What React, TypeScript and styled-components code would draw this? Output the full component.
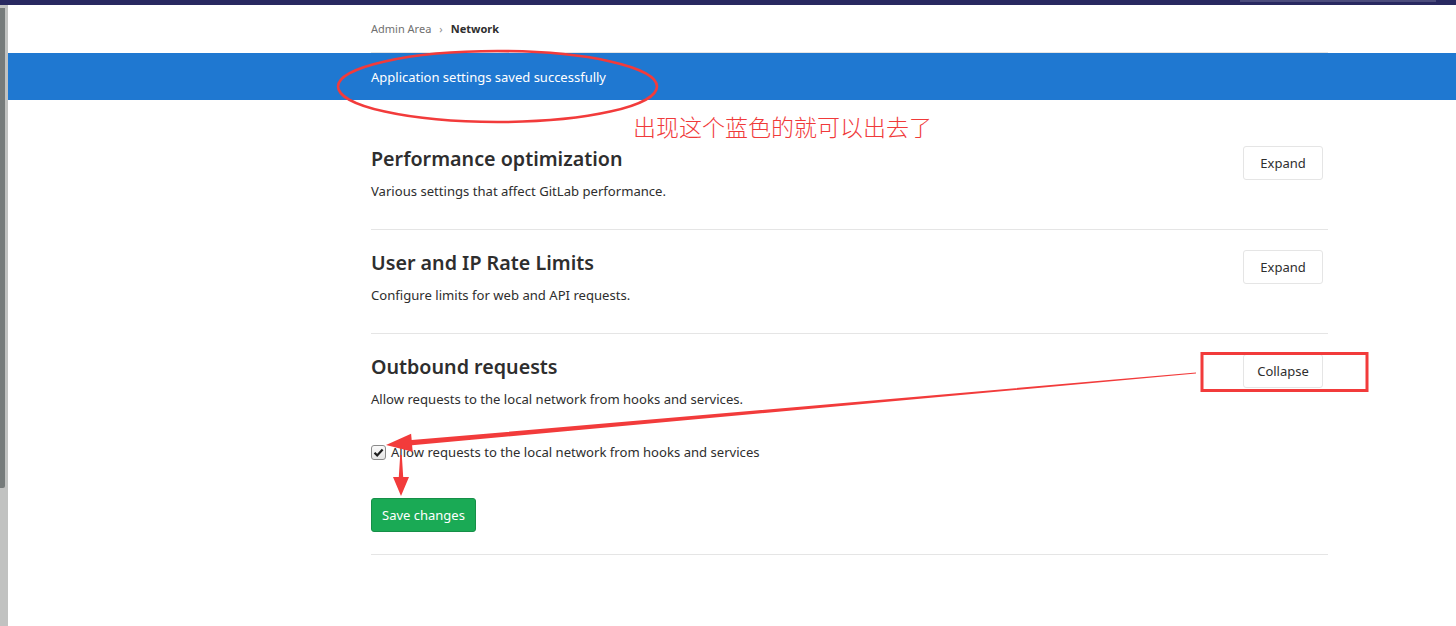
import React from "react";
import styled, { createGlobalStyle } from "styled-components";

const GlobalStyle = createGlobalStyle`
  html, body {
    margin: 0;
    padding: 0;
    background: #ffffff;
    font-family: "Noto Sans", "Open Sans", sans-serif;
    color: #2e2e2e;
    overflow: hidden;
  }
`;

const Page = styled.div`
  position: relative;
  width: 1456px;
  height: 626px;
  display: flex;
  flex-direction: column;
`;

const TopBar = styled.div`
  height: 5px;
  background: #292961;
  display: flex;
  justify-content: flex-end;
  padding-right: 20px;
`;

const SearchEdge = styled.div`
  width: 196px;
  height: 2px;
  background: #4c4c7c;
`;

const Body = styled.div`
  flex: 1;
  display: flex;
`;

const ScrollTrack = styled.div`
  width: 8px;
  background: #c1c2c1;
  padding-top: 3px;
`;

const ScrollThumb = styled.div`
  width: 5px;
  height: 480px;
  background: #767b7b;
  border-radius: 0 0 2px 0;
`;

const Main = styled.main`
  flex: 1;
  display: flex;
  flex-direction: column;
`;

const Container = styled.div`
  width: 957px;
  margin-left: 363px;
`;

const Breadcrumbs = styled.nav`
  height: 47px;
  display: flex;
  align-items: center;
  gap: 8px;
  font-size: 11px;
  border-bottom: 1px solid #e5e5e5;
`;

const Crumb = styled.span<{ $current?: boolean }>`
  color: ${(p) => (p.$current ? "#2e2e2e" : "#707070")};
  font-weight: ${(p) => (p.$current ? 700 : 400)};
`;

const Chevron = styled.span`
  color: #8f8f8f;
  font-size: 11px;
`;

const Flash = styled.div`
  height: 47px;
  background: #1f78d1;
  color: #ffffff;
  font-size: 13px;
  display: flex;
  align-items: center;
`;

const Section = styled.section<{ $top?: number; $bottom?: number }>`
  display: flex;
  flex-direction: column;
  padding: ${(p) => p.$top ?? 19}px 0 ${(p) => p.$bottom ?? 28}px;
  border-bottom: 1px solid #e5e5e5;
`;

const SectionHeader = styled.div`
  display: flex;
  justify-content: space-between;
  align-items: flex-start;
`;

const HeaderText = styled.div`
  display: flex;
  flex-direction: column;
`;

const Title = styled.h4`
  margin: 0;
  font-size: 19.7px;
  line-height: 28px;
  font-weight: 600;
  color: #2e2e2e;
`;

const Desc = styled.p`
  margin: 8px 0 0;
  font-size: 13.1px;
  line-height: 20px;
`;

const Button = styled.button`
  width: 80px;
  height: 34px;
  margin: 1px 5px 0 0;
  background: #ffffff;
  border: 1px solid #e5e5e5;
  border-radius: 3px;
  font-family: inherit;
  font-size: 13px;
  color: #2e2e2e;
`;

const CheckRow = styled.label`
  display: flex;
  align-items: center;
  gap: 5px;
  margin-top: 33px;
  font-size: 13.1px;
  line-height: 20px;
`;

const CheckBox = styled.span`
  width: 13px;
  height: 13px;
  border: 1px solid #8a8a8a;
  border-radius: 3px;
  background: linear-gradient(#fafafa, #e6e6e6);
  display: flex;
  align-items: center;
  justify-content: center;
`;

const SaveButton = styled.button`
  align-self: flex-start;
  margin-top: 36px;
  height: 34px;
  padding: 0 10px;
  background: #1aaa55;
  border: 1px solid #168f48;
  border-radius: 3px;
  color: #ffffff;
  font-family: inherit;
  font-size: 13px;
`;

const Overlay = styled.svg`
  position: absolute;
  left: 0;
  top: 0;
  pointer-events: none;
`;

const Note = styled.div`
  position: absolute;
  left: 633px;
  top: 111px;
  font-family: "Noto Sans CJK SC", sans-serif;
  font-size: 23px;
  line-height: 30px;
  color: #f03a3a;
  font-weight: 300;
`;

const red = "#f23b3b";

// tapered arrow from (x1,y1) to tip (x2,y2)
function arrowPoints(x1: number, y1: number, x2: number, y2: number, w0: number, w1: number, hl: number, hw: number) {
  const len = Math.hypot(x2 - x1, y2 - y1);
  const dx = (x2 - x1) / len;
  const dy = (y2 - y1) / len;
  const nx = -dy;
  const ny = dx;
  const bx = x2 - dx * hl;
  const by = y2 - dy * hl;
  const pts = [
    [x1 + nx * w0, y1 + ny * w0],
    [bx + nx * w1, by + ny * w1],
    [bx + nx * hw, by + ny * hw],
    [x2, y2],
    [bx - nx * hw, by - ny * hw],
    [bx - nx * w1, by - ny * w1],
    [x1 - nx * w0, y1 - ny * w0],
  ];
  return pts.map((p) => p.map((v) => v.toFixed(1)).join(",")).join(" ");
}

export default function App() {
  return (
    <>
      <GlobalStyle />
      <Page>
        <TopBar>
          <SearchEdge />
        </TopBar>
        <Body>
          <ScrollTrack>
            <ScrollThumb />
          </ScrollTrack>
          <Main>
            <Container>
              <Breadcrumbs>
                <Crumb>Admin Area</Crumb>
                <Chevron>›</Chevron>
                <Crumb $current>Network</Crumb>
              </Breadcrumbs>
            </Container>
            <Flash>
              <Container>Application settings saved successfully</Container>
            </Flash>
            <Container>
              <Section $top={45}>
                <SectionHeader>
                  <HeaderText>
                    <Title>Performance optimization</Title>
                    <Desc>Various settings that affect GitLab performance.</Desc>
                  </HeaderText>
                  <Button>Expand</Button>
                </SectionHeader>
              </Section>
              <Section>
                <SectionHeader>
                  <HeaderText>
                    <Title>User and IP Rate Limits</Title>
                    <Desc>Configure limits for web and API requests.</Desc>
                  </HeaderText>
                  <Button>Expand</Button>
                </SectionHeader>
              </Section>
              <Section $bottom={22}>
                <SectionHeader>
                  <HeaderText>
                    <Title>Outbound requests</Title>
                    <Desc>Allow requests to the local network from hooks and services.</Desc>
                  </HeaderText>
                  <Button>Collapse</Button>
                </SectionHeader>
                <CheckRow>
                  <CheckBox>
                    <svg width="11" height="11" viewBox="0 0 11 11">
                      <path d="M1.5 5.8 L4.2 8.4 L9.6 2.4" fill="none" stroke="#1e1e1e" strokeWidth="2.2" />
                    </svg>
                  </CheckBox>
                  Allow requests to the local network from hooks and services
                </CheckRow>
                <SaveButton>Save changes</SaveButton>
              </Section>
            </Container>
          </Main>
        </Body>
        <Overlay width="1456" height="626" viewBox="0 0 1456 626">
          <ellipse cx="497.5" cy="86.5" rx="159.5" ry="35.5" fill="none" stroke={red} strokeWidth="2.6" />
          <rect x="1202" y="353.5" width="165" height="37" fill="none" stroke={red} strokeWidth="3" />
          <polygon points={arrowPoints(1196, 373, 386, 445, 0.4, 2.6, 26, 9)} fill={red} />
          <polygon points={arrowPoints(401, 455, 401, 496, 0.8, 2.2, 19, 8)} fill={red} />
        </Overlay>
        <Note>出现这个蓝色的就可以出去了</Note>
      </Page>
    </>
  );
}
